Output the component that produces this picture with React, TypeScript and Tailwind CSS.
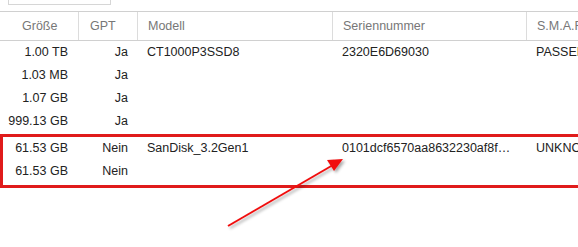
import React from 'react';

type Row = { size: string; gpt: string; model?: string; serial?: string; smart?: string };

const columns = [
  { key: 'size', label: 'Größe', width: 'w-[78px]', head: 'pl-[22px]', cell: 'text-right pr-[10px]' },
  { key: 'gpt', label: 'GPT', width: 'w-[59px]', head: 'pl-[11px]', cell: 'text-right pr-[9px]' },
  { key: 'model', label: 'Modell', width: 'w-[195px]', head: 'pl-[10px]', cell: 'pl-[10px]' },
  { key: 'serial', label: 'Seriennummer', width: 'w-[194px]', head: 'pl-[10px]', cell: 'pl-[10px]' },
  { key: 'smart', label: 'S.M.A.R.T.', width: 'w-[120px]', head: 'pl-[10px]', cell: 'pl-[10px]' },
] as const;

const nvme: Row[] = [
  { size: '1.00 TB', gpt: 'Ja', model: 'CT1000P3SSD8', serial: '2320E6D69030', smart: 'PASSED' },
  { size: '1.03 MB', gpt: 'Ja' },
  { size: '1.07 GB', gpt: 'Ja' },
  { size: '999.13 GB', gpt: 'Ja' },
];

const usb: Row[] = [
  { size: '61.53 GB', gpt: 'Nein', model: 'SanDisk_3.2Gen1', serial: '0101dcf6570aa8632230af8f…', smart: 'UNKNOWN' },
  { size: '61.53 GB', gpt: 'Nein' },
];

function DiskRow({ row }: { row: Row }) {
  return (
    <div className="flex h-[23px] items-center whitespace-nowrap text-[#222]">
      {columns.map((c) => (
        <div key={c.key} className={`${c.width} shrink-0 overflow-hidden ${c.cell}`}>
          {row[c.key] ?? ''}
        </div>
      ))}
    </div>
  );
}

export default function App() {
  return (
    <div className="relative h-[247px] w-[578px] overflow-hidden bg-white font-['Liberation_Sans',Arial,sans-serif] text-[12.5px]">
      {/* bottom edge of the search field above the grid */}
      <div className="ml-[8px] h-[5px] w-[103px] border-x border-b border-[#d6d6d6]" />

      <div className="mt-[6px]">
        <div className="flex h-[30px] items-center border-y border-[#d0d0d0] text-[#777]">
          {columns.map((c, i) => (
            <div
              key={c.key}
              className={`${c.width} flex h-full shrink-0 items-center ${c.head} ${i > 0 ? 'border-l border-[#dcdcdc]' : ''}`}
            >
              {c.label}
            </div>
          ))}
        </div>
        {nvme.map((r, i) => (
          <DiskRow key={i} row={r} />
        ))}
        <div className="h-[4px]" />
        {usb.map((r, i) => (
          <DiskRow key={i} row={r} />
        ))}
      </div>

      {/* highlight around the USB stick */}
      <div className="absolute left-0 top-[134px] h-[54px] w-[578px] border-[3px] border-r-0 border-[#e01b1b]" />

      <svg className="absolute left-0 top-0" width="578" height="247" viewBox="0 0 578 247">
        <defs>
          <filter id="shade" x="-20%" y="-20%" width="140%" height="140%">
            <feDropShadow dx="2" dy="2" stdDeviation="1.5" floodColor="#000" floodOpacity="0.35" />
          </filter>
        </defs>
        <g filter="url(#shade)">
          <line x1="228" y1="226" x2="333" y2="165" stroke="#f01010" strokeWidth="2" />
          <polygon points="343,159 327,160 334,171" fill="#f01010" />
        </g>
      </svg>
    </div>
  );
}
